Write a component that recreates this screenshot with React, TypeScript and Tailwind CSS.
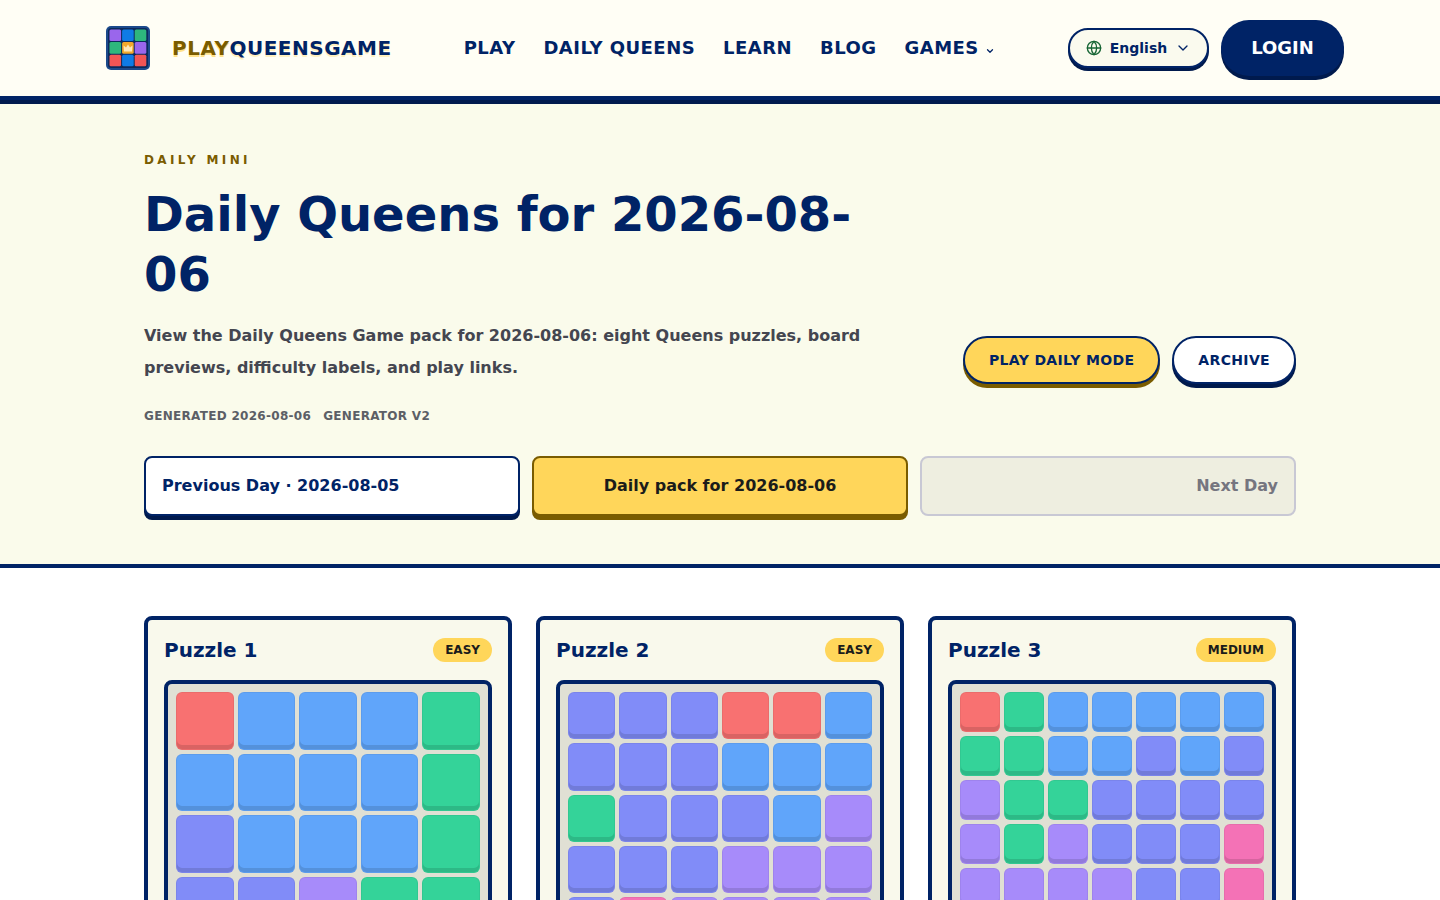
import { ChevronDown, Globe } from "lucide-react"

const NAVY = "#002366"

const cellColors: Record<string, string> = {
  r: "bg-[#f87171]",
  b: "bg-[#60a5fa]",
  g: "bg-[#34d399]",
  i: "bg-[#818cf8]",
  v: "bg-[#a78bfa]",
  p: "bg-[#f472b6]",
}

const puzzles = [
  { name: "Puzzle 1", level: "EASY", size: 5, rows: ["rbbbg", "bbbbg", "ibbbg", "iivgg", "iivvg"] },
  { name: "Puzzle 2", level: "EASY", size: 6, rows: ["iiirrb", "iiibbb", "giiibv", "iiivvv", "ipvvvv", "ppvvvv"] },
  {
    name: "Puzzle 3",
    level: "MEDIUM",
    size: 7,
    rows: ["rgbbbbb", "ggbbibi", "vggiiii", "vgviiip", "vvvviip", "vvvviip", "vvvviip"],
  },
]

// small app icon: 3x3 board with a crown tile in the middle
const Logo = () => {
  const tiles = [
    ["#9a66ec", "#0f7be6", "#2eb67d"],
    ["#2eb67d", "#f2a92c", "#9a66ec"],
    ["#f25555", "#0f7be6", "#f25555"],
  ]
  return (
    <svg width="64" height="64" viewBox="0 0 64 64" className="shrink-0">
      <rect x="10" y="10" width="44" height="44" rx="5" fill="#1c4a8c" />
      <rect x="12" y="12" width="40" height="40" rx="3" fill="#0c2a5c" />
      {tiles.map((row, y) =>
        row.map((fill, x) => (
          <rect key={`${x}-${y}`} x={13.5 + x * 12.6} y={13.5 + y * 12.6} width="11.6" height="11.6" rx="1.5" fill={fill} />
        )),
      )}
      <path d="M28 35.5 L27.5 29.5 L30 31.5 L32 28.5 L34 31.5 L36.5 29.5 L36 35.5 Z" fill="#fde9b8" />
    </svg>
  )
}

const Board = ({ size, rows }: { size: number; rows: string[] }) => {
  const gridCols = size === 5 ? "grid-cols-5" : size === 6 ? "grid-cols-6" : "grid-cols-7"
  return (
    <div className={`grid ${gridCols} gap-1 rounded-lg border-4 border-[#002366] bg-[#e0e0d4] p-2`}>
      {rows.join("").split("").map((c, i) => (
        <div
          key={i}
          className={`aspect-square rounded-md border border-black/5 shadow-[inset_0_-4px_0_rgba(0,0,0,0.12)] ${cellColors[c]}`}
        />
      ))}
    </div>
  )
}

export default function App() {
  return (
    <div className="h-screen overflow-hidden bg-white font-['DejaVu_Sans',sans-serif]" style={{ color: NAVY }}>
      {/* Header */}
      <header className="border-b-4 border-[#002366] bg-[#fffef5] shadow-[0_4px_0_#001a4d]">
        <div className="mx-auto flex h-24 max-w-7xl items-center justify-between px-4">
          <div className="flex items-center">
            <a className="flex items-center gap-3">
              <Logo />
              <span className="text-xl font-bold tracking-wide [text-shadow:0_2px_0_rgba(255,214,90,0.35)]">
                <span className="text-[#7a5c00] [text-shadow:0_2px_0_rgba(255,214,90,0.7)]">PLAY</span>
                <span>QUEENSGAME</span>
              </span>
            </a>
            <nav className="ml-[72px] flex items-center gap-7 text-lg font-bold tracking-[0.026em]">
              <a>PLAY</a>
              <a>DAILY QUEENS</a>
              <a>LEARN</a>
              <a>BLOG</a>
              <a className="flex items-center">
                GAMES
                <ChevronDown className="ml-1.5 mt-1.5 h-2.5 w-2.5" strokeWidth={3} />
              </a>
            </nav>
          </div>
          <div className="flex items-center gap-3">
            <button className="flex h-10 w-[141px] items-center justify-center gap-2 rounded-full border-2 border-[#002366] bg-[#fafaee] text-sm font-bold shadow-[0_3px_0_#001a4d]">
              <Globe className="h-4 w-4 text-[#166534]" />
              English
              <ChevronDown className="h-4 w-4" strokeWidth={2} />
            </button>
            <button className="h-14 w-[123px] rounded-[28px] bg-[#002366] text-lg font-bold text-white shadow-[0_4px_0_#001a4d]">
              LOGIN
            </button>
          </div>
        </div>
      </header>

      {/* Hero */}
      <section className="mt-1 border-b-4 border-[#002366] bg-[#fafbeb] px-36 py-12">
        <div className="flex items-end justify-between">
          <div className="max-w-3xl">
            <p className="text-xs font-bold tracking-[0.28em] text-[#7a5c00]">DAILY MINI</p>
            <h1 className="mt-4 text-5xl font-bold leading-[60px]">Daily Queens for 2026-08-06</h1>
            <p className="mt-4 font-semibold leading-8 text-[#444650]">
              View the Daily Queens Game pack for 2026-08-06: eight Queens puzzles, board previews, difficulty labels, and play links.
            </p>
          </div>
          <div className="flex gap-3">
            <button className="h-12 rounded-full border-2 border-[#002366] bg-[#ffd65a] px-6 text-sm font-bold tracking-wide shadow-[0_4px_0_#7a5c00]">
              PLAY DAILY MODE
            </button>
            <button className="h-12 rounded-full border-2 border-[#002366] bg-white px-6 text-sm font-bold tracking-wide shadow-[0_4px_0_#001a4d]">
              ARCHIVE
            </button>
          </div>
        </div>
        <div className="mt-6 flex gap-3 text-xs font-bold leading-4 tracking-wide text-[#5c5f66]">
          <span>GENERATED 2026-08-06</span>
          <span>GENERATOR V2</span>
        </div>
        <div className="mt-8 grid grid-cols-3 gap-3 font-bold">
          <a className="flex h-[60px] items-center rounded-lg border-2 border-[#002366] bg-white px-4 shadow-[0_4px_0_#001a4d]">
            Previous Day · 2026-08-05
          </a>
          <a className="flex h-[60px] items-center justify-center rounded-lg border-2 border-[#7a5c00] bg-[#ffd65a] px-4 text-[#1b1c1a] shadow-[0_4px_0_#7a5c00]">
            Daily pack for 2026-08-06
          </a>
          <span className="flex h-[60px] items-center justify-end rounded-lg border-2 border-[#c8c8d4] bg-[#eeeee0] px-4 text-[#75757f]">
            Next Day
          </span>
        </div>
      </section>

      {/* Puzzle cards */}
      <section className="grid grid-cols-3 gap-6 px-36 py-12">
        {puzzles.map((puzzle) => (
          <article key={puzzle.name} className="rounded-lg border-4 border-[#002366] bg-[#f9f9ec] p-4">
            <div className="mb-4 flex items-center justify-between">
              <h2 className="text-xl font-bold">{puzzle.name}</h2>
              <span className="rounded-full bg-[#ffd65a] px-3 py-1 text-xs font-bold text-[#1b1c1a]">
                {puzzle.level}
              </span>
            </div>
            <Board size={puzzle.size} rows={puzzle.rows} />
          </article>
        ))}
      </section>
    </div>
  )
}
